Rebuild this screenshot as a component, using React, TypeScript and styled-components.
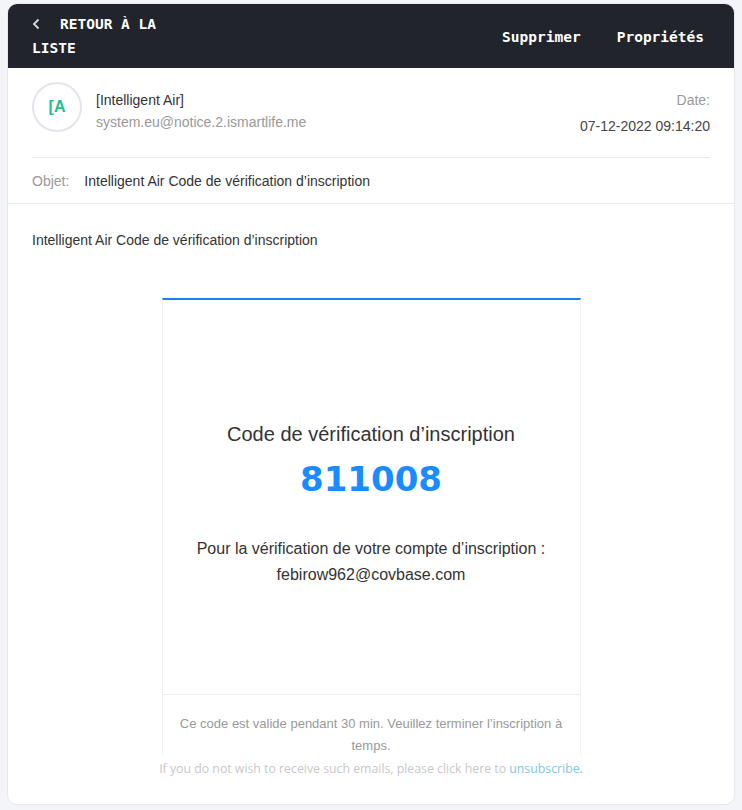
import React from "react";
import styled, { createGlobalStyle } from "styled-components";

const GlobalStyle = createGlobalStyle`
  html, body {
    margin: 0;
    padding: 0;
    background: #f4f5f9;
  }
  body {
    font-family: "Liberation Sans", Arial, sans-serif;
  }
`;

const Page = styled.div`
  padding: 3px 7px 4px 7px;
  box-sizing: border-box;
  width: 742px;
`;

const Card = styled.div`
  background: #fff;
  border: 1px solid #e6e7ef;
  border-radius: 10px;
  overflow: hidden;
  height: 802px;
  box-sizing: border-box;
  display: flex;
  flex-direction: column;
`;

const TopBar = styled.div`
  background: #21242b;
  height: 65px;
  margin: -1px -1px 0 -1px;
  padding: 9px 31px 0 25px;
  box-sizing: border-box;
  display: flex;
  justify-content: space-between;
  align-items: flex-start;
  font-family: "DejaVu Sans Mono", "Liberation Mono", monospace;
  font-weight: bold;
  font-size: 14.5px;
  color: #fff;
`;

const BackLink = styled.div`
  width: 140px;
  line-height: 24px;
`;

const Chevron = styled.svg`
  display: inline-block;
  vertical-align: -1px;
  margin: 0 20px 0 0;
`;

const Actions = styled.div`
  display: flex;
  gap: 36px;
  padding-top: 15px;
`;

const Action = styled.span`
  line-height: 20px;
`;

const HeaderInfo = styled.div`
  padding: 14px 24px 0 24px;
`;

const SenderRow = styled.div`
  display: flex;
  align-items: flex-start;
  height: 75px;
  border-bottom: 1px solid #e9eaee;
`;

const Avatar = styled.div`
  width: 46px;
  height: 46px;
  border: 2px solid #e4e4ee;
  border-radius: 50%;
  display: flex;
  align-items: center;
  justify-content: center;
  color: #1dbf8e;
  font-weight: bold;
  font-size: 16px;
  flex-shrink: 0;
`;

const SenderText = styled.div`
  margin-left: 14px;
  padding-top: 9px;
  flex: 1;
  font-size: 14px;
`;

const SenderName = styled.div`
  color: #333;
  line-height: 18px;
`;

const SenderMail = styled.div`
  color: #999;
  line-height: 20px;
  margin-top: 3px;
`;

const DateBox = styled.div`
  text-align: right;
  font-size: 14px;
  padding-top: 8px;
`;

const DateLabel = styled.div`
  color: #999;
  line-height: 20px;
`;

const DateValue = styled.div`
  color: #444;
  line-height: 20px;
  margin-top: 6px;
`;

const SubjectRow = styled.div`
  display: flex;
  gap: 15px;
  height: 45px;
  align-items: center;
  font-size: 14px;
`;

const SubjectLabel = styled.span`
  color: #999;
`;

const SubjectText = styled.span`
  color: #333;
`;

const Body = styled.div`
  border-top: 1px solid #e9eaee;
  margin: 0 -1px;
  padding: 26px 25px 0 25px;
  flex: 1;
  display: flex;
  flex-direction: column;
`;

const Intro = styled.div`
  font-size: 14px;
  color: #333;
  line-height: 20px;
`;

const Mail = styled.div`
  width: 419px;
  margin: 48px auto 0 auto;
  border-top: 2px solid #1e80de;
  border-left: 1px solid #f0f0f3;
  border-right: 1px solid #f0f0f3;
  display: flex;
  flex-direction: column;
  box-sizing: border-box;
`;

const MailMain = styled.div`
  height: 395px;
  box-sizing: border-box;
  padding-top: 121px;
  text-align: center;
  border-bottom: 1px solid #ececf0;
`;

const MailTitle = styled.div`
  font-size: 20px;
  color: #333;
  line-height: 26px;
`;

const Code = styled.div`
  font-family: "DejaVu Sans", Verdana, sans-serif;
  font-size: 34px;
  font-weight: bold;
  color: #1a8cff;
  line-height: 42px;
  margin-top: 11px;
`;

const MailText = styled.div`
  font-size: 16px;
  color: #333;
  line-height: 26px;
  margin-top: 36px;
`;

const MailFooter = styled.div`
  padding: 18px 14px 0 14px;
  text-align: center;
  font-size: 13px;
  color: #999;
  line-height: 22px;
  height: 60px;
  box-sizing: border-box;
`;

const Unsubscribe = styled.div`
  text-align: center;
  font-family: "Open Sans", "Noto Sans", sans-serif;
  font-size: 12.3px;
  color: #c8c8c8;
  line-height: 16px;
  margin-top: 6px;
`;

const UnsubLink = styled.a`
  color: #79c9e3;
  text-decoration: none;
`;

export default function App() {
  return (
    <Page>
      <GlobalStyle />
      <Card>
        <TopBar>
          <BackLink>
            <Chevron width="8" height="12" viewBox="0 0 8 12">
              <path
                d="M6.5 1.5 L2 6 L6.5 10.5"
                fill="none"
                stroke="#d8d9dd"
                strokeWidth="1.8"
              />
            </Chevron>
            RETOUR À LA LISTE
          </BackLink>
          <Actions>
            <Action>Supprimer</Action>
            <Action>Propriétés</Action>
          </Actions>
        </TopBar>
        <HeaderInfo>
          <SenderRow>
            <Avatar>[A</Avatar>
            <SenderText>
              <SenderName>[Intelligent Air]</SenderName>
              <SenderMail>system.eu@notice.2.ismartlife.me</SenderMail>
            </SenderText>
            <DateBox>
              <DateLabel>Date:</DateLabel>
              <DateValue>07-12-2022 09:14:20</DateValue>
            </DateBox>
          </SenderRow>
          <SubjectRow>
            <SubjectLabel>Objet:</SubjectLabel>
            <SubjectText>Intelligent Air Code de vérification d’inscription</SubjectText>
          </SubjectRow>
        </HeaderInfo>
        <Body>
          <Intro>Intelligent Air Code de vérification d’inscription</Intro>
          <Mail>
            <MailMain>
              <MailTitle>Code de vérification d’inscription</MailTitle>
              <Code>811008</Code>
              <MailText>
                Pour la vérification de votre compte d’inscription :<br />
                febirow962@covbase.com
              </MailText>
            </MailMain>
            <MailFooter>
              Ce code est valide pendant 30 min. Veuillez terminer l’inscription à temps.
            </MailFooter>
          </Mail>
          <Unsubscribe>
            If you do not wish to receive such emails, please click here to{" "}
            <UnsubLink href="#">unsubscribe.</UnsubLink>
          </Unsubscribe>
        </Body>
      </Card>
    </Page>
  );
}
